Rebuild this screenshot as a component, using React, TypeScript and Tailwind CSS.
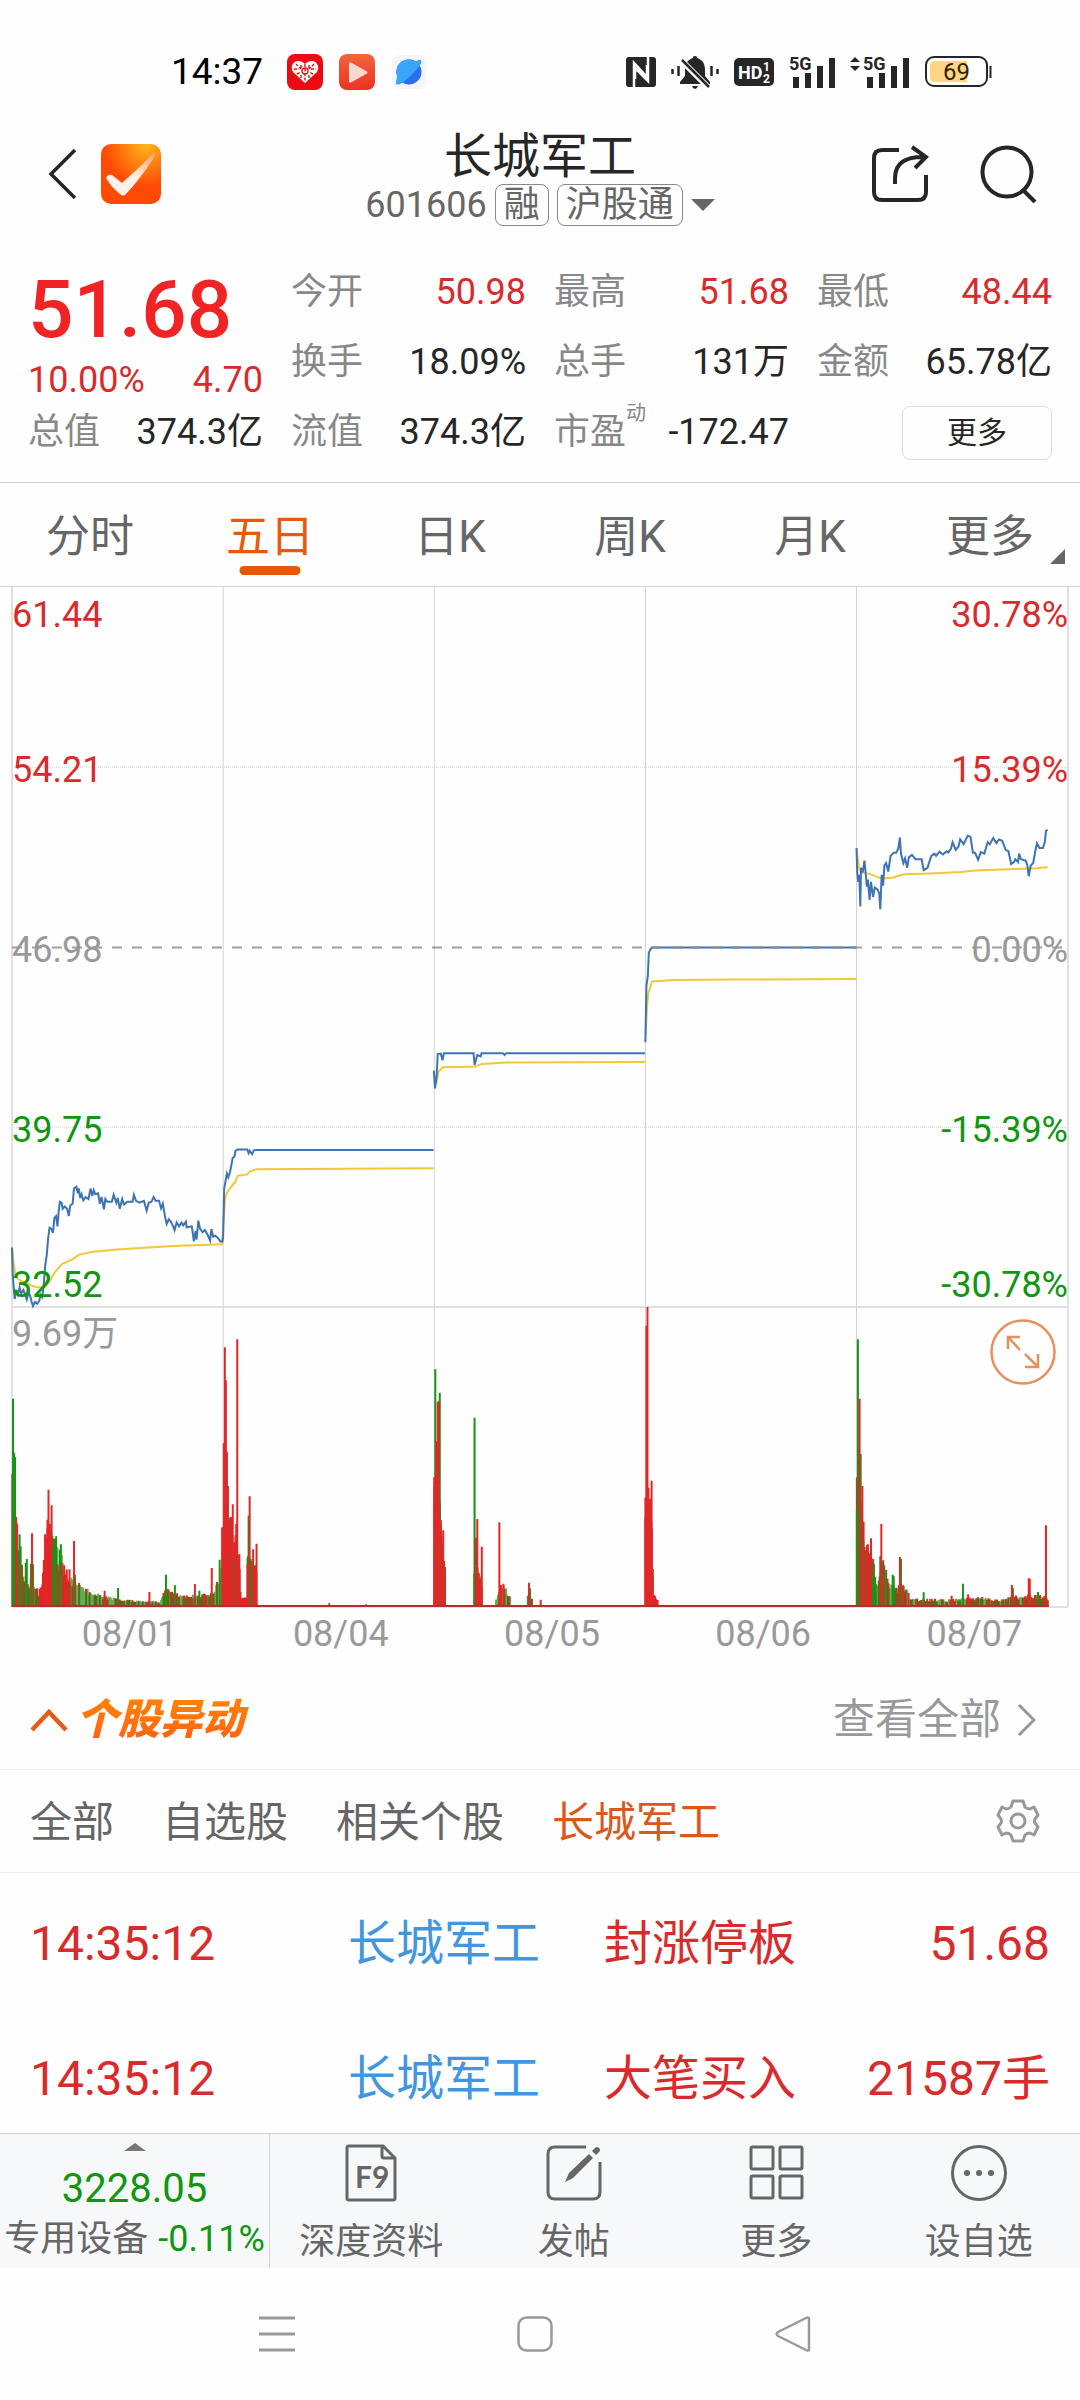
import type { ReactNode } from 'react'

type Tone = 'up' | 'plain'

interface Quote {
  label: string
  value: string
  tone?: Tone
  sup?: string
}

const quoteColumns: Quote[][] = [
  [
    { label: '今开', value: '50.98', tone: 'up' },
    { label: '换手', value: '18.09%' },
    { label: '流值', value: '374.3亿' },
  ],
  [
    { label: '最高', value: '51.68', tone: 'up' },
    { label: '总手', value: '131万' },
    { label: '市盈', value: '-172.47', sup: '动' },
  ],
  [
    { label: '最低', value: '48.44', tone: 'up' },
    { label: '金额', value: '65.78亿' },
  ],
]

const periods = ['分时', '五日', '日K', '周K', '月K', '更多']
const filters = ['全部', '自选股', '相关个股', '长城军工']
const dates = ['08/01', '08/04', '08/05', '08/06', '08/07']

const events = [
  { time: '14:35:12', name: '长城军工', type: '封涨停板', value: '51.68' },
  { time: '14:35:12', name: '长城军工', type: '大笔买入', value: '21587手' },
]

// Chart space: each day is 613 units wide, starting at x = 35
const dayLines = [648, 1261, 1874, 2487]

const priceLines = [
  '35,1415 37,1470 40,1500 43,1524 47,1505 52,1515 57,1500 62,1512 68,1505 73,1515 78,1525 83,1510 88,1518 92,1530 96,1539 102,1530 108,1534 114,1528 118,1515 123,1520 127,1495 131,1455 136,1430 140,1395 144,1373 149,1375 154,1384 158,1352 163,1348 167,1370 171,1335 174,1318 179,1320 182,1333 188,1328 195,1333 200,1348 204,1326 211,1322 215,1290 222,1286 226,1300 229,1290 233,1310 237,1302 242,1315 249,1308 257,1312 263,1290 268,1306 272,1293 277,1302 285,1300 290,1322 295,1308 302,1334 306,1312 312,1318 325,1318 330,1303 338,1320 342,1310 348,1333 355,1312 360,1324 370,1318 385,1318 389,1303 395,1316 405,1320 418,1316 426,1337 432,1320 440,1318 446,1308 452,1316 462,1316 468,1332 473,1322 479,1348 484,1365 490,1355 496,1360 503,1370 507,1378 513,1362 520,1370 527,1362 532,1368 540,1360 542,1372 557,1370 560,1385 563,1402 568,1380 571,1398 576,1358 581,1375 588,1382 595,1378 603,1388 610,1400 614,1376 619,1392 625,1390 632,1394 640,1402 646,1402 648,1392 651,1290 656,1270 659,1258 663,1266 668,1255 672,1240 676,1225 681,1222 684,1210 690,1207 718,1207 722,1215 725,1210 732,1217 737,1209 745,1208 1259,1208',
  '1260,1040 1263,1078 1268,1050 1271,1005 1280,1004 1285,1018 1289,1003 1375,1003 1378,1028 1386,1007 1396,1010 1398,1003 1460,1003 1465,1007 1470,1003 1873,1003',
  '1874,980 1877,860 1881,840 1884,790 1888,784 1893,779 2487,779',
  '2487,568 2489,620 2492,640 2495,625 2498,692 2500,610 2505,620 2510,595 2514,625 2517,650 2520,635 2525,678 2529,640 2535,672 2540,652 2548,656 2553,665 2556,698 2560,625 2564,648 2568,605 2573,600 2579,618 2586,585 2595,578 2602,578 2608,570 2613,546 2616,580 2623,600 2628,590 2634,610 2639,588 2648,583 2658,592 2676,592 2682,615 2693,610 2704,585 2713,580 2718,585 2728,576 2738,582 2748,575 2753,578 2761,570 2766,556 2775,572 2783,565 2788,550 2798,560 2810,542 2818,545 2825,578 2831,578 2840,593 2848,577 2858,580 2868,556 2874,560 2884,547 2893,558 2901,550 2910,553 2920,572 2928,575 2936,602 2944,598 2948,592 2956,598 2959,580 2964,592 2978,595 2983,605 2987,628 2993,605 3000,600 3006,575 3011,558 3018,568 3028,568 3034,555 3037,532 3042,530',
]

const averageLines = [
  '35,1415 40,1450 46,1478 60,1485 85,1493 105,1499 130,1499 145,1485 160,1467 180,1450 210,1440 230,1430 270,1424 340,1419 430,1415 520,1411 645,1408 650,1350 654,1310 660,1297 684,1275 690,1263 718,1260 725,1254 745,1249 1259,1247',
  '1262,1060 1268,1065 1273,1043 1285,1033 1375,1032 1400,1026 1470,1023 1873,1022',
  '1875,960 1879,900 1883,875 1893,851 1960,848 2130,847 2487,846',
  '2487,570 2494,610 2500,620 2525,623 2560,633 2590,631 2625,624 2700,622 2790,619 2830,616 2930,613 3010,611 3042,609',
]

type Bar = [number, number, 'r' | 'g']

// Tallest bars of each session: x, top, direction
const peakBars: Bar[] = [
  [38, 325, 'g'], [41, 487, 'g'], [44, 500, 'g'], [47, 680, 'r'], [50, 700, 'r'], [53, 780, 'g'], [57, 732, 'g'], [60, 768, 'g'], [64, 823, 'r'],
  [75, 818, 'g'], [78, 806, 'g'], [90, 820, 'g'], [93, 729, 'r'], [96, 822, 'g'], [131, 732, 'r'], [134, 768, 'r'], [138, 688, 'r'], [141, 598, 'r'],
  [144, 700, 'r'], [147, 720, 'r'], [150, 645, 'r'], [152, 736, 'g'], [155, 775, 'g'], [159, 745, 'g'], [163, 738, 'g'], [167, 822, 'r'],
  [174, 778, 'g'], [177, 762, 'g'], [180, 820, 'r'], [202, 837, 'r'], [215, 752, 'r'], [218, 853, 'g'], [304, 901, 'r'], [343, 893, 'g'], [434, 905, 'r'],
  [482, 853, 'g'], [508, 885, 'g'], [566, 881, 'r'], [579, 901, 'g'], [615, 833, 'r'], [638, 808, 'g'], [645, 712, 'r'],
  [650, 458, 'r'], [653, 171, 'r'], [656, 270, 'r'], [659, 485, 'r'], [662, 587, 'r'], [665, 688, 'g'], [668, 682, 'r'], [671, 680, 'r'],
  [674, 740, 'r'], [676, 642, 'r'], [679, 804, 'g'], [684, 735, 'r'], [686, 700, 'r'], [689, 147, 'r'], [692, 792, 'r'], [695, 792, 'r'],
  [719, 822, 'r'], [722, 676, 'g'], [725, 618, 'r'], [728, 806, 'g'], [731, 812, 'g'], [735, 777, 'r'], [740, 825, 'r'], [745, 760, 'r'],
  [956, 939, 'r'], [1063, 942, 'r'], [1261, 560, 'r'], [1264, 237, 'g'], [1267, 452, 'r'], [1271, 334, 'r'], [1274, 333, 'r'], [1277, 307, 'g'],
  [1280, 688, 'r'], [1283, 770, 'g'], [1287, 720, 'r'], [1292, 830, 'r'], [1378, 382, 'g'], [1382, 742, 'r'], [1386, 686, 'r'], [1390, 848, 'r'],
  [1394, 865, 'r'], [1399, 769, 'r'], [1450, 696, 'r'], [1455, 884, 'r'], [1462, 880, 'r'], [1536, 877, 'r'], [1539, 894, 'g'], [1570, 928, 'r'],
  [1874, 682, 'r'], [1877, 106, 'r'], [1880, 50, 'r'], [1883, 592, 'r'], [1886, 625, 'r'], [1889, 625, 'r'], [1892, 571, 'r'], [1895, 857, 'r'],
  [2488, 660, 'g'], [2491, 147, 'g'], [2496, 325, 'r'], [2499, 491, 'g'], [2504, 587, 'r'], [2507, 753, 'g'], [2510, 770, 'r'], [2514, 780, 'g'],
  [2518, 775, 'r'], [2522, 788, 'r'], [2525, 790, 'r'], [2529, 744, 'r'], [2532, 850, 'g'], [2536, 818, 'g'], [2541, 860, 'g'], [2556, 798, 'g'],
  [2559, 701, 'r'], [2563, 815, 'g'], [2567, 825, 'r'], [2573, 838, 'g'], [2592, 853, 'g'], [2595, 858, 'g'], [2613, 800, 'r'], [2616, 806, 'g'],
  [2622, 885, 'r'], [2638, 908, 'r'], [2682, 906, 'g'], [2763, 916, 'r'], [2796, 880, 'g'], [2811, 912, 'r'], [2938, 884, 'r'], [2941, 893, 'g'],
  [2987, 864, 'r'], [2990, 865, 'r'], [3005, 914, 'r'], [3014, 905, 'g'], [3037, 705, 'r'],
]

interface VolumeRange {
  points: [number, number][]
  red: number
}

// Background volume: tops are interpolated between points, red is the share of rising minutes
const volumeRanges: VolumeRange[] = [
  { points: [[36, 600], [50, 780], [66, 865], [84, 875], [98, 865], [113, 910]], red: 0.5 },
  { points: [[113, 908], [125, 850], [138, 730], [150, 730]], red: 1 },
  { points: [[150, 750], [165, 790], [184, 820], [200, 870], [225, 880], [260, 905], [300, 918], [350, 930], [465, 934], [482, 895], [530, 920], [600, 915], [625, 890], [645, 835]], red: 0.45 },
  { points: [[647, 720], [664, 720], [680, 780], [696, 850], [700, 928], [716, 920]], red: 1 },
  { points: [[718, 815], [732, 820], [746, 845]], red: 0.4 },
  { points: [[1261, 480], [1270, 480], [1282, 720], [1293, 840]], red: 0.85 },
  { points: [[1376, 850], [1388, 830], [1402, 890]], red: 0.4 },
  { points: [[1440, 930], [1455, 885], [1470, 900], [1482, 920]], red: 0.5 },
  { points: [[1532, 905], [1545, 925]], red: 0.5 },
  { points: [[1874, 640], [1893, 640], [1897, 910], [1912, 935]], red: 1 },
  { points: [[2488, 480], [2500, 600], [2510, 770], [2530, 800], [2549, 885], [2562, 810], [2580, 885], [2605, 890], [2625, 885], [2645, 925], [2750, 930], [2850, 922], [2900, 930], [2950, 920], [3000, 916], [3043, 922]], red: 0.5 },
]

const BASE = 950

const random = (n: number) => {
  const s = Math.sin(n * 12.9898) * 43758.5453
  return s - Math.floor(s)
}

const fillBars = volumeRanges.flatMap(({ points, red }) => {
  const bars: Bar[] = []
  for (let i = 0; i < points.length - 1; i++) {
    const [x0, y0] = points[i]
    const [x1, y1] = points[i + 1]
    for (let x = x0; x < x1; x += 2.5) {
      const top = y0 + ((y1 - y0) * (x - x0)) / (x1 - x0)
      const height = (BASE - top) * (0.7 + 0.45 * random(x))
      bars.push([x, BASE - height, random(x + 7) < red ? 'r' : 'g'])
    }
  }
  return bars
})

const barPath = (bars: Bar[], side: 'r' | 'g') =>
  bars
    .filter((bar) => bar[2] === side)
    .map(([x, top]) => `M${x.toFixed(1)} ${BASE}V${top.toFixed(1)}`)
    .join('')

function StatusBar() {
  return (
    <div className="flex h-[122px] items-center justify-between pt-[22px] pr-[88px] pl-[171px]">
      <div className="flex items-center gap-4">
        <span className="mr-2 text-[37px] leading-[40px] text-black">14:37</span>
        <svg className="size-9" viewBox="0 0 36 36">
          <rect width="36" height="36" rx="8" fill="#ee0a12" />
          <path d="M18 29 6 18C3 13 6 7 11 7c3 0 5 1 7 3 2-2 4-3 7-3 5 0 8 6 5 11Z" fill="#fff" />
          <path d="M18 10v18M9 10l5 5M27 10l-5 5M7 15h5M24 15h5M10 20l4-2M26 20l-4-2M14 24v-4M22 24v-4M14 11v3M22 11v3" stroke="#ee0a12" strokeWidth="1.4" strokeDasharray="3 1.5" />
          <circle cx="18" cy="17" r="3" fill="none" stroke="#ee0a12" strokeWidth="1.3" />
        </svg>
        <svg className="size-9" viewBox="0 0 36 36">
          <defs>
            <linearGradient id="play" x1="0" y1="0" x2="0" y2="1">
              <stop offset="0" stopColor="#f0663a" />
              <stop offset="1" stopColor="#ee3124" />
            </linearGradient>
          </defs>
          <rect width="36" height="36" rx="8" fill="url(#play)" />
          <path d="M12 8.500 28 17.500Q29 18.500 28 19.500L12 28.500Q10 29 10 27V10Q10 8 12 8.500Z" fill="#fcd8d0" />
        </svg>
        <svg className="size-9" viewBox="0 0 36 36">
          <rect x="1" y="1" width="34" height="34" rx="8" fill="#f4f5f7" />
          <circle cx="18" cy="18" r="12.500" fill="#2d6df0" />
          <path d="M6 22A12.500 12.500 0 0 1 25 7.500Q28 5 30 6 31 8 28.500 12 22 21 11 29 7 32 5 30 5 28 6 22Z" fill="#3ba4fb" />
        </svg>
      </div>
      <div className="flex items-center gap-[15px]">
        <svg className="size-[30px]" viewBox="0 0 30 30">
          <rect width="30" height="30" rx="3" fill="#262626" />
          <path d="M8 30V6L21 20V8M22 0V24L9 11V22" stroke="#fff" strokeWidth="2.500" fill="none" />
        </svg>
        <svg className="h-[34px] w-[48px]" viewBox="0 0 48 34" fill="#262626">
          <path d="M24 1c2 0 2 1 2 2 6 2 8 6 8 12v6l5 6v2H9v-2l5-6v-6c0-6 2-10 8-12 0-1 0-2 2-2ZM21 31h6q-1 3-3 3t-3-3Z" />
          <path d="M10 5 38 33" stroke="#fff" strokeWidth="6" />
          <path d="M11 5 38 32" stroke="#262626" strokeWidth="2.500" />
          <path d="M1.500 14v5M7.500 11v10M40.500 11v10M46.500 14v5" stroke="#262626" strokeWidth="2.500" />
        </svg>
        <svg className="h-7 w-10" viewBox="0 0 40 28">
          <rect width="40" height="28" rx="5" fill="#262626" />
          <g fill="#fff" fontWeight="700" className="font-[Roboto]">
            <text x="4" y="21" fontSize="18">HD</text>
            <text x="29" y="13" fontSize="12">1</text>
            <text x="29" y="25" fontSize="12">2</text>
          </g>
        </svg>
        <svg className="h-9 w-[46px]" viewBox="0 -2 46 36" fill="#262626">
          <text x="0" y="14" fontSize="18" fontWeight="700" className="font-[Roboto]">5G</text>
          <path d="M4 21h6v11H4ZM16 17h6v15h-6ZM28 10h6v22h-6ZM40 2h6v30h-6Z" />
        </svg>
        <svg className="h-9 w-[60px]" viewBox="0 -2 60 36" fill="#262626">
          <path d="M5 1l5 5H0ZM5 15l5-5H0Z" />
          <text x="13" y="14" fontSize="18" fontWeight="700" className="font-[Roboto]">5G</text>
          <path d="M17 21h6v11h-6ZM29 17h6v15h-6ZM41 10h6v22h-6ZM53 2h6v30h-6Z" />
        </svg>
        <svg className="h-8 w-[67px]" viewBox="0 0 67 32">
          <rect x="1" y="1" width="61" height="29" rx="8" fill="#fff" stroke="#262626" strokeWidth="2" />
          <path d="M10 5h32v21H10q-5 0-5-5V10q0-5 5-5Z" fill="#fdd583" />
          <path d="M65.500 10v12" stroke="#262626" strokeWidth="2" />
          <text x="18" y="24" fontSize="24" fill="#33210a" className="font-[Roboto]">69</text>
        </svg>
      </div>
    </div>
  )
}

function Header() {
  return (
    <header className="grid grid-cols-[1fr_auto_1fr] items-center px-[43px]">
      <div className="flex items-center gap-[25px] pl-[5px]">
        <button aria-label="返回">
          <svg className="h-[52px] w-7" viewBox="0 0 28 52" fill="none" stroke="#262626" strokeWidth="3.500">
            <path d="M27 2 3 26 27 50" />
          </svg>
        </button>
        <a href="#home" aria-label="首页">
          <svg className="size-[60px]" viewBox="0 0 60 60">
            <defs>
              <radialGradient id="logo" cx="0.750" cy="0" r="0.700">
                <stop offset="0" stopColor="#ffb81c" />
                <stop offset="1" stopColor="#ff4a05" />
              </radialGradient>
              <linearGradient id="tick" x1="0" y1="1" x2="1" y2="0">
                <stop offset="0.500" stopColor="#fff1ea" />
                <stop offset="1" stopColor="#ffa35e" />
              </linearGradient>
            </defs>
            <rect width="60" height="60" rx="10" fill="url(#logo)" />
            <path d="M5 34Q7 30 11 31L21 39Q38 24 53 9 55 9 54 12 40 34 25 50 22 53 19 50 10 43 5 34Z" fill="url(#tick)" />
          </svg>
        </a>
      </div>
      <div className="flex flex-col items-center">
        <h1 className="pt-2 text-[48px] leading-[54px] text-[#262626]">长城军工</h1>
        <div className="flex items-center gap-2 text-[36px] leading-[40px] text-[#666]">
          <span>601606</span>
          <span className="rounded-lg border border-[#888] px-2">融</span>
          <span className="rounded-lg border border-[#888] px-2">沪股通</span>
          <svg className="h-3 w-6" viewBox="0 0 24 12">
            <path d="M0 0h24L12 12Z" fill="#666" />
          </svg>
        </div>
      </div>
      <div className="flex items-center justify-end gap-[50px]">
        <button aria-label="分享">
          <svg className="size-[58px]" viewBox="0 0 58 58" fill="none" stroke="#262626" strokeWidth="4">
            <path d="M28 5H11Q3 5 3 13V47Q3 55 11 55H47Q55 55 55 47V30" />
            <path d="M24 39V33Q24 11 54 12M41 2 55 12 44 23" />
          </svg>
        </button>
        <button aria-label="搜索">
          <svg className="size-[58px]" viewBox="0 0 58 58" fill="none" stroke="#262626" strokeWidth="4">
            <circle cx="28" cy="27" r="24.500" />
            <path d="M43 44 56 57" />
          </svg>
        </button>
      </div>
    </header>
  )
}

function QuoteRow({ label, value, tone = 'plain', sup }: Quote) {
  return (
    <div className="flex justify-between leading-[52px]">
      <span className="relative text-[#888]">
        {label}
        {sup && <sup className="absolute top-[-5px] left-full text-[20px] leading-6">{sup}</sup>}
      </span>
      <span className={tone === 'up' ? 'text-[#d92b2b]' : 'text-[#262626]'}>{value}</span>
    </div>
  )
}

function QuotePanel() {
  return (
    <section className="grid grid-cols-4 gap-7 px-7 pt-10 pb-[22px] text-[36px]">
      <div className="flex flex-col">
        <div className="text-[80px] leading-[88px] font-medium text-[#f02424]">51.68</div>
        <div className="flex justify-between leading-[52px] text-[#d92b2b]">
          <span>10.00%</span>
          <span>4.70</span>
        </div>
        <QuoteRow label="总值" value="374.3亿" />
      </div>
      {quoteColumns.map((rows, i) => (
        <div key={i} className="flex flex-col gap-[18px]">
          {rows.map((row) => (
            <QuoteRow key={row.label} {...row} />
          ))}
          {i === quoteColumns.length - 1 && (
            <button className="h-[54px] w-[150px] self-end rounded-lg border border-[#ddd] text-[30px] leading-[50px] text-[#262626]">
              更多
            </button>
          )}
        </div>
      ))}
    </section>
  )
}

function PeriodTabs() {
  return (
    <nav className="relative grid h-[104px] grid-cols-6 border-t border-[#d0d0d0]">
      {periods.map((period) => (
        <button
          key={period}
          className={`relative pt-[5px] text-[44px] leading-[60px] ${period === '五日' ? 'text-[#e65a0a]' : 'text-[#666]'}`}
        >
          {period}
          {period === '五日' && (
            <span className="absolute bottom-[11px] left-1/2 h-[9px] w-[61px] -translate-x-1/2 rounded-full bg-[#ea5504]" />
          )}
        </button>
      ))}
      <svg className="absolute right-[15px] bottom-[22px] size-[15px]" viewBox="0 0 15 15">
        <path d="M15 0V15H0Z" fill="#666" />
      </svg>
    </nav>
  )
}

function AxisLabels({ values }: { values: string[] }) {
  const tones = ['text-[#d92b2b]', 'text-[#d92b2b]', 'text-[#999]', 'text-[#109610]', 'text-[#109610]']
  const places = ['top-[8px]', 'top-[163px]', 'top-[343px]', 'top-[523px]', 'top-[678px]']
  return values.map((value, i) => (
    <span key={value} className={`absolute ${places[i]} ${tones[i]}`}>
      {value}
    </span>
  ))
}

function Chart() {
  return (
    <section className="border-t border-[#d5d5d5] px-3 text-[36px] leading-[40px]">
      <div className="relative h-[720px]">
        <svg className="size-full overflow-visible" viewBox="35 15 3066 1526" preserveAspectRatio="none" fill="none">
          <g stroke="#d4d4d4" strokeWidth="1">
            {dayLines.map((x) => (
              <path key={x} d={`M${x} 15V1541`} vectorEffect="non-scaling-stroke" />
            ))}
            <path d="M35 397H3101M35 1160H3101" strokeDasharray="1 1" vectorEffect="non-scaling-stroke" />
          </g>
          <path d="M35 15V1541M3101 15V1541M35 1541H3101" stroke="#e0e0e3" strokeWidth="2" vectorEffect="non-scaling-stroke" />
          {averageLines.map((points) => (
            <polyline key={points} points={points} stroke="#f0c838" strokeWidth="2" vectorEffect="non-scaling-stroke" />
          ))}
          {priceLines.map((points) => (
            <polyline key={points} points={points} stroke="#3d74b4" strokeWidth="2" vectorEffect="non-scaling-stroke" />
          ))}
          <path d="M35 779H3101" stroke="#888" strokeOpacity="0.800" strokeWidth="2" strokeDasharray="10 10" vectorEffect="non-scaling-stroke" />
        </svg>
        <div className="absolute inset-y-0 left-0 flex">
          <AxisLabels values={['61.44', '54.21', '46.98', '39.75', '32.52']} />
        </div>
        <div className="absolute inset-y-0 right-0 flex justify-end">
          <AxisLabels values={['30.78%', '15.39%', '0.00%', '-15.39%', '-30.78%']} />
        </div>
      </div>
      <div className="relative h-[300px]">
        <svg className="size-full overflow-visible" viewBox="35 50 3066 900" preserveAspectRatio="none" fill="none">
          <g stroke="#d4d4d4" strokeWidth="1">
            {dayLines.map((x) => (
              <path key={x} d={`M${x} 50V950`} vectorEffect="non-scaling-stroke" />
            ))}
          </g>
          <path d="M35 50V950M3101 50V950M35 950H3101" stroke="#e0e0e3" strokeWidth="2" vectorEffect="non-scaling-stroke" />
          <path d={barPath(fillBars, 'r')} stroke="#e62222" strokeWidth="2" vectorEffect="non-scaling-stroke" />
          <path d={barPath(fillBars, 'g')} stroke="#1a8a10" strokeOpacity="0.700" strokeWidth="1.700" vectorEffect="non-scaling-stroke" />
          <path d={barPath(peakBars, 'g')} stroke="#159515" strokeWidth="2" vectorEffect="non-scaling-stroke" />
          <path d={barPath(peakBars, 'r')} stroke="#e02828" strokeWidth="2" vectorEffect="non-scaling-stroke" />
          <path d="M35 947H3045" stroke="#b03030" strokeWidth="2" vectorEffect="non-scaling-stroke" />
        </svg>
        <span className="absolute top-[7px] left-0 text-[#999]">9.69万</span>
        <button aria-label="全屏" className="absolute top-3 right-3">
          <svg className="size-[66px]" viewBox="0 0 66 66" fill="none" stroke="#e8905c" strokeWidth="2.500">
            <circle cx="33" cy="33" r="31.500" />
            <path d="M30 31 18 18M18 30V18H30M35 35 48 48M48 35V48H35" />
          </svg>
        </button>
      </div>
      <div className="grid h-[62px] grid-cols-5 pt-[7px] text-[#999]">
        {dates.map((date) => (
          <time key={date} className="pl-6 text-center">
            {date}
          </time>
        ))}
      </div>
    </section>
  )
}

function EventsPanel() {
  return (
    <section>
      <div className="flex h-[101px] items-center justify-between border-b border-[#eee] px-[30px] pt-[2px] text-[42px] leading-[60px]">
        <h2 className="flex items-center gap-2">
          <svg className="h-6 w-[38px]" viewBox="0 0 38 24" fill="none" stroke="#e65a1a" strokeWidth="4.500">
            <path d="M2 22 19 4 36 22" />
          </svg>
          <span className="bg-gradient-to-b from-[#ff8800] to-[#ff5a14] bg-clip-text pr-2 font-black text-transparent italic">
            个股异动
          </span>
        </h2>
        <a href="#events" className="flex items-center gap-4 pr-[14px] text-[#999]">
          查看全部
          <svg className="h-8 w-[19px]" viewBox="0 0 19 32" fill="none" stroke="#999" strokeWidth="3">
            <path d="M2 1 17 16 2 31" />
          </svg>
        </a>
      </div>
      <div className="flex h-[103px] items-center justify-between border-b border-[#eee] pr-10 pl-[30px]">
        <div className="flex gap-12 pt-1 text-[42px] leading-[60px] text-[#666]">
          {filters.map((filter) => (
            <button key={filter} className={filter === '长城军工' ? 'text-[#d9581a]' : ''}>
              {filter}
            </button>
          ))}
        </div>
        <button aria-label="设置">
          <svg className="size-11" viewBox="0 0 44 44" fill="none" stroke="#999" strokeWidth="3" strokeLinejoin="round">
            <path d="M17 2H27L29 8Q31 10 34 10L38 8 42 16 39 20Q38 22 39 24L42 28 38 36 34 34Q31 34 29 36L27 42H17L15 36Q13 34 10 34L6 36 2 28 5 24Q6 22 5 20L2 16 6 8 10 10Q13 10 15 8Z" />
            <circle cx="22" cy="22" r="7" />
          </svg>
        </button>
      </div>
      <table className="w-full table-fixed text-left text-[48px] leading-[64px] text-[#d92b2b]">
        <tbody>
          {events.map((event) => (
            <tr key={event.type} className="[&>td]:pt-[39px] [&>td]:pb-8 last:[&>td]:pb-[22px]">
              <td className="w-[348px] pl-[30px]">{event.time}</td>
              <td className="w-[256px]">
                <a href="#stock" className="text-[#4296e0]">
                  {event.name}
                </a>
              </td>
              <td>{event.type}</td>
              <td className="pr-[30px] text-right">{event.value}</td>
            </tr>
          ))}
        </tbody>
      </table>
    </section>
  )
}

function Action({ label, children }: { label: string; children: ReactNode }) {
  return (
    <button className="flex flex-1 flex-col items-center gap-4 pt-[10px]">
      <svg className="size-[58px]" viewBox="0 0 58 58" fill="none" stroke="#666" strokeWidth="3">
        {children}
      </svg>
      <span className="leading-[48px]">{label}</span>
    </button>
  )
}

function BottomBar() {
  return (
    <footer className="flex h-[135px] border-t border-[#d5d5d5] bg-[#f7f8fa] text-[36px] text-[#666]">
      <a href="#sector" className="flex w-[270px] flex-col items-center border-r border-[#d5d5d5] pt-[9px]">
        <svg className="h-2 w-[22px]" viewBox="0 0 22 8">
          <path d="M11 0 22 8H0Z" fill="#777" />
        </svg>
        <span className="pt-[14px] text-[40px] leading-[48px] text-[#109610]">3228.05</span>
        <span className="flex gap-[10px] leading-[52px] whitespace-nowrap">
          专用设备
          <span className="text-[#109610]">-0.11%</span>
        </span>
      </a>
      <Action label="深度资料">
        <path d="M6 2H41L53 14V54Q53 56 51 56H7Q5 56 5 54V4Q5 2 7 2M40 2V12Q40 14 42 14H53" />
        <text x="13" y="44" fontSize="30" fontWeight="700" fill="#666" stroke="none" className="font-[Lato]">F9</text>
      </Action>
      <Action label="发帖">
        <path d="M41 3H10Q3 3 3 10V48Q3 55 10 55H48Q55 55 55 48V18" />
        <path d="M20 38 24 29 44 10 48 14 28 34ZM47 7 50 4Q52 2 54 4T54 8L51 11Z" fill="#666" stroke="none" />
      </Action>
      <Action label="更多">
        <rect x="4" y="3" width="22" height="22" rx="1.500" />
        <rect x="33" y="3" width="22" height="22" rx="1.500" />
        <rect x="4" y="32" width="22" height="22" rx="1.500" />
        <rect x="33" y="32" width="22" height="22" rx="1.500" />
      </Action>
      <Action label="设自选">
        <circle cx="29" cy="29" r="26.500" />
        <g fill="#666" stroke="none">
          <circle cx="17" cy="29" r="3" />
          <circle cx="29" cy="29" r="3" />
          <circle cx="41" cy="29" r="3" />
        </g>
      </Action>
    </footer>
  )
}

function SystemNav() {
  return (
    <div className="flex h-[132px] items-center justify-center gap-[222px] pr-[10px]">
      <button aria-label="任务">
        <svg className="size-9" viewBox="0 0 36 36" stroke="#999" strokeWidth="3">
          <path d="M0 2H36M0 18H36M0 34H36" />
        </svg>
      </button>
      <button aria-label="主屏幕">
        <svg className="size-9" viewBox="0 0 36 36" fill="none" stroke="#999" strokeWidth="2.500">
          <rect x="1.500" y="1.500" width="33" height="33" rx="8" />
        </svg>
      </button>
      <button aria-label="后退">
        <svg className="size-9" viewBox="0 0 36 36" fill="none" stroke="#999" strokeWidth="2.500" strokeLinejoin="round">
          <path d="M32 1.500Q34 1 34 3V33Q34 35 32 34.500L3 20Q0 18 3 16Z" />
        </svg>
      </button>
    </div>
  )
}

export default function App() {
  return (
    <main className="min-h-screen bg-[#fefefe] font-[Roboto,'Noto_Sans_CJK_SC',sans-serif]">
      <StatusBar />
      <Header />
      <QuotePanel />
      <PeriodTabs />
      <Chart />
      <EventsPanel />
      <BottomBar />
      <SystemNav />
    </main>
  )
}
